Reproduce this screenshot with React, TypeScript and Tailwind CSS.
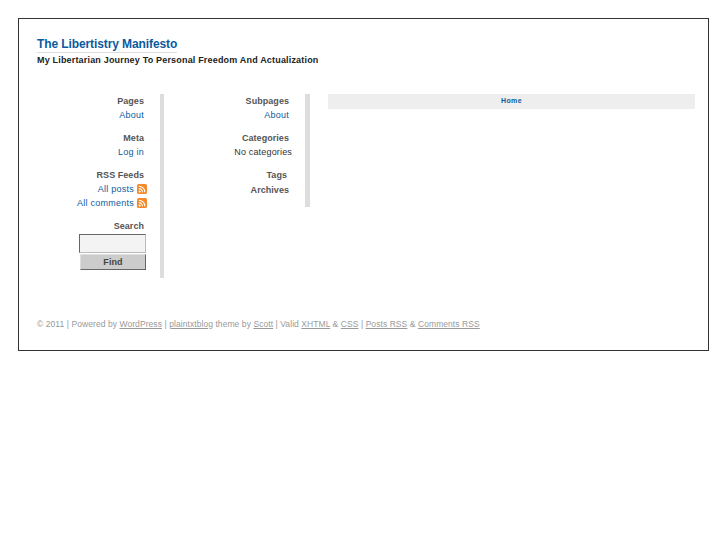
import React from 'react';

function RssIcon() {
  return (
    <svg width="10" height="10" viewBox="0 0 10 10" className="ml-[3px] shrink-0">
      <rect width="10" height="10" rx="1.5" fill="#f58a2c" />
      <circle cx="2.6" cy="7.4" r="1" fill="#fff" />
      <path d="M1.8 4.6a3.6 3.6 0 0 1 3.6 3.6M1.8 2.2a6 6 0 0 1 6 6" stroke="#fff" strokeWidth="1.1" fill="none" />
    </svg>
  );
}

function Heading({ children, className = '' }: { children: React.ReactNode; className?: string }) {
  return <div className={`h-[14px] leading-[14px] text-[9px] font-bold tracking-[0.05px] text-[#555] ${className}`}>{children}</div>;
}

function LinkLine({ children, className = '' }: { children: React.ReactNode; className?: string }) {
  return <div className={`h-[14px] leading-[14px] text-[9px] tracking-[0.25px] text-[#0b5a9e] ${className}`}>{children}</div>;
}

export default function App() {
  return (
    <div className="bg-white w-[727px] h-[545px] pt-[18px] pl-[18px] font-['Liberation_Sans',Arial,sans-serif]">
      <div className="w-[691px] h-[333px] border border-[#333] flex flex-col pl-[18px] pr-[13px]">
        <header className="pt-[18px]">
          <h1 className="h-[16px] leading-[15px] text-[12px] font-bold tracking-[-0.1px] text-[#0b5a9e] border-b border-[#ddd] w-[140px] whitespace-nowrap">
            The Libertistry Manifesto
          </h1>
          <p className="h-[14px] leading-[14px] text-[9px] font-bold tracking-[0.18px] text-[#222]">
            My Libertarian Journey To Personal Freedom And Actualization
          </p>
        </header>

        <div className="flex items-start mt-[27px]">
          <aside className="w-[127px] h-[184px] border-r-[4px] border-[#ddd] pr-[16px] text-right shrink-0">
            <Heading>Pages</Heading>
            <LinkLine>About</LinkLine>
            <Heading className="mt-[9px]">Meta</Heading>
            <LinkLine>Log in</LinkLine>
            <Heading className="mt-[9px]">RSS Feeds</Heading>
            <LinkLine className="flex items-center justify-end -mr-[3px]">
              All posts <RssIcon />
            </LinkLine>
            <LinkLine className="flex items-center justify-end -mr-[3px]">
              All comments <RssIcon />
            </LinkLine>
            <Heading className="mt-[9px]">Search</Heading>
            <div className="flex flex-col items-end -mr-[2px]">
              <div className="w-[67px] h-[19px] mt-[1px] bg-[#f3f3f3] border border-t-[#666] border-l-[#666] border-r-[#bbb] border-b-[#bbb]" />
              <button className="w-[66px] h-[16px] mt-[1px] bg-[#ccc] border border-t-[#ddd] border-l-[#ddd] border-r-[#666] border-b-[#666] text-[9px] leading-[12px] font-bold tracking-[0.1px] text-[#444]">
                Find
              </button>
            </div>
          </aside>

          <aside className="w-[146px] h-[113px] border-r-[5px] border-[#ddd] pr-[16px] text-right shrink-0">
            <Heading>Subpages</Heading>
            <LinkLine>About</LinkLine>
            <Heading className="mt-[9px]">Categories</Heading>
            <div className="h-[14px] leading-[14px] text-[9px] tracking-[0.17px] text-[#333] -mr-[3px]">No categories</div>
            <Heading className="mt-[9px] mr-[2px]">Tags</Heading>
            <Heading className="mt-[1px]">Archives</Heading>
          </aside>

          <nav className="ml-[18px] w-[367px] h-[15px] bg-[#eee] text-center text-[7px] leading-[13px] font-bold tracking-[0.4px] text-[#0b5a9e]">
            Home
          </nav>
        </div>

        <footer className="mt-[40px] h-[12px] leading-[12px] text-[8.5px] text-[#999] whitespace-nowrap tracking-[0.07px]">
          © 2011 | Powered by <span className="underline">WordPress</span> | <span className="underline">plaintxtblog</span> theme by <span className="underline">Scott</span> | Valid <span className="underline">XHTML</span> &amp; <span className="underline">CSS</span> | <span className="underline">Posts RSS</span> &amp; <span className="underline">Comments RSS</span>
        </footer>
      </div>
    </div>
  );
}
